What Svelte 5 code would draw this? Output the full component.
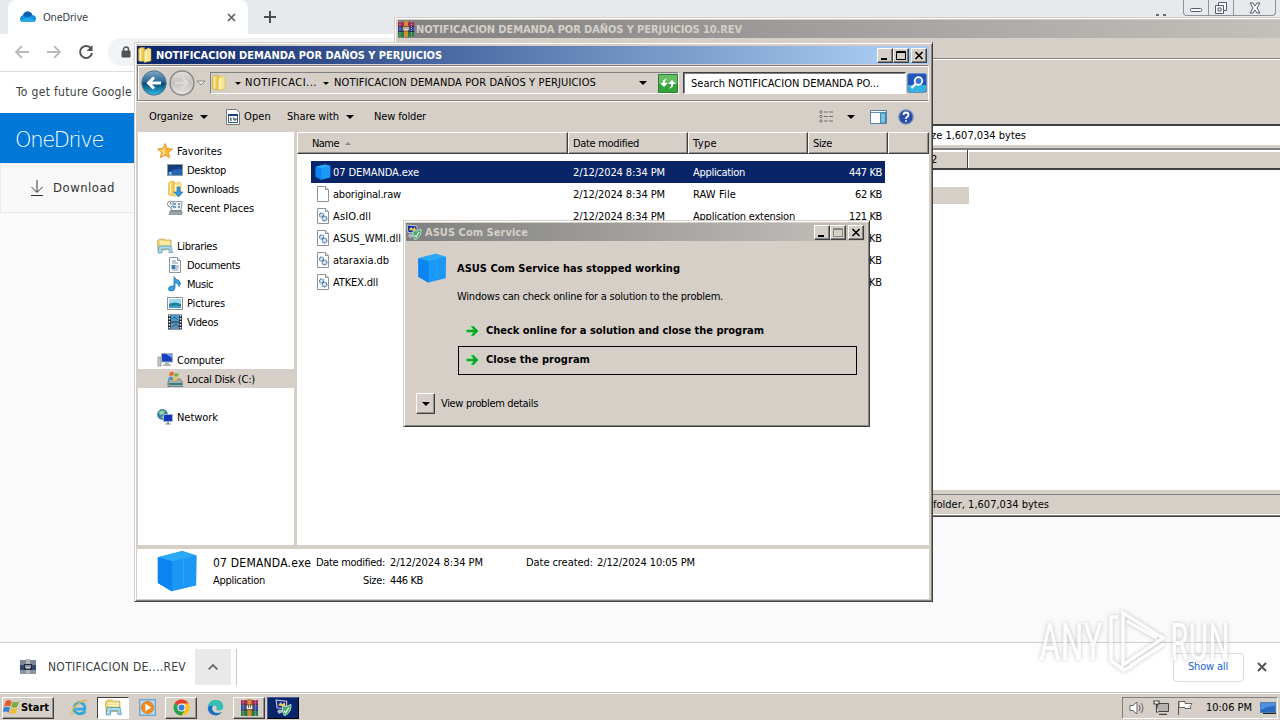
<script>
  const favorites = [
    { label: "Favorites", icon: "star", width: 45, root: true },
    { label: "Desktop", icon: "desktop", width: 39 },
    { label: "Downloads", icon: "downloads", width: 52 },
    { label: "Recent Places", icon: "recent", width: 67 },
  ];
  const libraries = [
    { label: "Libraries", icon: "library", width: 40, root: true },
    { label: "Documents", icon: "document", width: 53 },
    { label: "Music", icon: "music", width: 26 },
    { label: "Pictures", icon: "picture", width: 38 },
    { label: "Videos", icon: "video", width: 31 },
  ];
  const computer = [
    { label: "Computer", icon: "computer", width: 47, root: true },
    { label: "Local Disk (C:)", icon: "disk", width: 68, selected: true },
  ];
  const network = [{ label: "Network", icon: "network", width: 41, root: true }];
  const groups = [favorites, libraries, computer, network];

  const files = [
    { name: "07 DEMANDA.exe", width: 86, modified: true, type: "Application", typeWidth: 52, size: "447 KB", icon: "cube", selected: true },
    { name: "aboriginal.raw", width: 68, modified: true, type: "RAW File", typeWidth: 43, size: "62 KB", icon: "file" },
    { name: "AsIO.dll", width: 38, modified: true, type: "Application extension", typeWidth: 102, size: "121 KB", icon: "dll" },
    { name: "ASUS_WMI.dll", width: 68, size: "KB", icon: "dll" },
    { name: "ataraxia.db", width: 56, size: "KB", icon: "dll" },
    { name: "ATKEX.dll", width: 45, size: "KB", icon: "dll" },
  ];

  const sizeWidths = { 2: 13, 5: 27, 6: 33 };

  const tasks = [
    { icon: "ie", state: "" },
    { icon: "library", state: "pressed" },
    { icon: "media", state: "" },
    { icon: "chrome", state: "raised" },
    { icon: "edge", state: "" },
    { icon: "rar", state: "raised" },
    { icon: "service", state: "flashing" },
  ];

  // Spreads a label's letters so that it takes the given width.
  function fit(node, width) {
    const natural = node.getBoundingClientRect().width;
    const gap = (width - natural) / node.textContent.length;
    node.style.letterSpacing = `${gap}px`;
  }
</script>

{#snippet icon(name, size = 16)}
  <svg class="icon" width={size} height={size} viewBox="0 0 16 16">
    {#if name === "star"}
      <path d="M8 .5l2.100 5 5.400.5-4 3.500 1.200 5.300L8 12.100l-4.700 2.700 1.200-5.300L.5 6l5.300-.5z" fill="#ffb52e" stroke="#e08a2a" stroke-width=".8" />
      <path d="M8 3v8l-3 2 1-4-3-2 3.500-.5z" fill="#ffe08a" />
    {:else if name === "desktop"}
      <rect x=".5" y="2.500" width="15" height="11" fill="#2464b4" stroke="#8e9aa8" />
      <path d="M1 3h14v4Q7 6 1 11z" fill="#173d78" />
      <path d="M2 12h3M2 10.500h2" stroke="#b8dcf5" />
    {:else if name === "folder" || name === "downloads"}
      <path d="M1.500 2l2-1.500h4V14l-4.500.5-1.500-1z" fill="#eec953" stroke="#c9a238" stroke-width=".5" />
      <path d="M3.500 1.500v12" stroke="#fff2b6" stroke-width="1.500" />
      <path d="M7 3.500l4-2.500 3 1v12l-7 1.500z" fill="#fbe48a" stroke="#cda83d" stroke-width=".5" />
      <path d="M9 4v10" stroke="#fff6c8" stroke-width="1.500" />
      {#if name === "downloads"}
        <path d="M10 6h3v5h3l-4.500 5L7 11h3z" fill="#2f9be0" stroke="#1669aa" stroke-width=".6" />
      {/if}
    {:else if name === "recent"}
      <path d="M5 1.500h10l-1 9H4z" fill="#edf3f6" stroke="#8999a3" />
      <path d="M3 11h12v3.500H2z" fill="#9aa6ad" stroke="#68747b" stroke-width=".6" />
      <path d="M7 4h2M11 4h2M6 7h3M11 7h2" stroke="#4683a8" stroke-width="1.500" />
      <circle cx="3.500" cy="4" r="3" fill="#fff" stroke="#7d8e99" />
      <path d="M3.500 2v2h2" fill="none" stroke="#557" stroke-width=".7" />
    {:else if name === "library"}
      <path d="M.5 2.500L3 1h4l1 1h6v9L1 13z" fill="#f2d779" stroke="#ba9b45" stroke-width=".7" />
      <path d="M3 4h10M3 6h10" stroke="#fff9d4" />
      <path d="M2 8h12l1.500 6.500H12V11H5v4H1z" fill="#a9d9ee" stroke="#4d93b4" stroke-width=".7" />
    {:else if name === "document" || name === "file" || name === "dll"}
      <path d="M2.500.5h8l3 3v12h-11z" fill="#fff" stroke="#8b939b" />
      <path d="M10.500.5v3h3" fill="#e4e8ec" stroke="#8b939b" />
      {#if name === "document"}
        <path d="M5 4h4M5 6h6M9 9h3M9 11h3M5 13h6" stroke="#8097aa" />
        <rect x="4.500" y="8" width="4" height="4" fill="#3b7fae" />
      {:else if name === "dll"}
        <circle cx="6.500" cy="7" r="2" fill="#dbe8f5" stroke="#3f719f" stroke-width="1.200" stroke-dasharray="1 .4" />
        <circle cx="9.500" cy="10.500" r="2.300" fill="#dbe8f5" stroke="#3f719f" stroke-width="1.300" stroke-dasharray="1 .4" />
      {/if}
    {:else if name === "music"}
      <path d="M7 .5q1 3 5 4 3 3 0 6 0-3-4-4v5q0 3.500-3.500 3.500T1.500 12.500 5 10h2z" fill="#38a2e2" stroke="#176aa8" stroke-width=".7" />
    {:else if name === "picture"}
      <rect x=".5" y="2.500" width="15" height="12" fill="#fff" stroke="#8a949c" />
      <rect x="2" y="4" width="12" height="9" fill="#9ed7ef" />
      <path d="M2 9q5-3 12 0v4H2z" fill="#277e92" />
      <path d="M2 11q7-1 12 0v2H2z" fill="#3c9ed0" />
    {:else if name === "video"}
      <rect x="1" y=".5" width="14" height="15" fill="#23272d" />
      <rect x="4" y="1" width="8" height="6.500" fill="#4a9ed3" />
      <rect x="4" y="8.500" width="8" height="6.500" fill="#5c93bd" />
      <path d="M5 5l3-2 3 3M5 13l4-3 3 3" stroke="#2b5b80" fill="none" />
      <path d="M2.500 1v14M13.500 1v14" stroke="#fff" stroke-width="1.500" stroke-dasharray="1.500 1.500" />
    {:else if name === "computer"}
      <rect x="1" y="5" width="3" height="9" fill="#c6ccd2" stroke="#777f87" stroke-width=".7" />
      <rect x="4.500" y="1.500" width="11" height="8.500" fill="#173fc0" stroke="#a8b0ba" />
      <path d="M9 2h6v4z" fill="#6f9df0" />
      <path d="M8 10.500h4v2h2v1.500H6v-1.500h2z" fill="#a8afb7" />
    {:else if name === "disk"}
      <path d="M2 8h11l3 4v3.500H1V11z" fill="#a3aeb3" stroke="#59666c" stroke-width=".7" />
      <path d="M2 12h13v2H2z" fill="#367e7a" />
      <path d="M3 1q3-1 4 1L6 5Q4 4 2 5z" fill="#e66a2c" />
      <path d="M8 2q2 1 4 0l-1 3Q9 6 7 5z" fill="#77ad3e" />
      <path d="M2 6q2-1 4 0L5 9Q3 8 1 9z" fill="#4a94d0" />
      <path d="M7 6q2 1 4 0l-1 3Q8 10 6 9z" fill="#f2c73c" />
    {:else if name === "network"}
      <circle cx="5.500" cy="5.500" r="5" fill="#2f8baa" stroke="#29616f" stroke-width=".6" />
      <path d="M2 3q4-3 6 0L6 5 3 6zM4 8l3-1v3z" fill="#a0d5a4" />
      <rect x="6.500" y="5.500" width="9" height="7" fill="#1735bc" stroke="#a8b4c3" />
      <path d="M10 13h2v1.500h2v1H8v-1h2z" fill="#8793a0" />
    {:else if name === "cube"}
      <path d="M.7 2.800L10 .4l5.500 1.700-.2 11.400L6 15.700.7 12.600z" fill="#1b97f6" />
      <path d="M.7 2.800L10 .4l5.500 1.700L6 4.300z" fill="#2ba9f6" />
      <path d="M.7 2.800L6 4.300v11.400L.7 12.600z" fill="#0a84f0" />
      <path d="M6 4.300v11.400" stroke="#0f86ea" stroke-width=".3" />
      <path d="M10.500 3.500v10" stroke="#2aa6f8" stroke-width=".5" />
    {:else if name === "open"}
      <path d="M1.500.5h10l3 3v12h-13z" fill="#fff" stroke="#777" />
      <rect x="3.500" y="5.500" width="9" height="8" fill="#fff" stroke="#345dab" />
      <path d="M3 6h10" stroke="#1a4092" stroke-width="2" />
      <path d="M5 9h1v3M8 9h1v2h2V9" fill="none" stroke="#333" />
    {:else if name === "rar"}
      <path d="M0 1h16v5H0z" fill="#a32d58" />
      <path d="M0 6h16v5H0z" fill="#304ca8" />
      <path d="M0 11h16v5H0z" fill="#267f46" />
      <path d="M0 5.500h16M0 10.500h16" stroke="#20202a" stroke-width=".8" />
      <path d="M6 0h4v16H6z" fill="#d58b31" />
      <path d="M2 1v15M13.500 1v15" stroke="#d1c4bf" stroke-width=".8" stroke-dasharray="1 1" />
      <rect x="4.500" y="5" width="7" height="5.500" fill="#745c43" />
      <path d="M6 6v3h4V6M8 6v3" stroke="#fff" fill="none" />
    {:else if name === "rar-gray"}
      <path d="M0 1h16v5H0z" fill="#7a8898" />
      <path d="M0 6h16v5H0z" fill="#35476a" />
      <path d="M0 11h16v4H0z" fill="#8a94a0" />
      <path d="M6 0h4v15H6z" fill="#b0b4b8" />
      <path d="M4 5h8v6H4z" fill="#202a45" />
      <path d="M6 6v3h4V6M8 6v3" stroke="#fff" fill="none" />
    {:else if name === "service"}
      <path d="M1 1l10 1v7L2 8.500z" fill="#162c9d" stroke="#c6ccdb" />
      <path d="M3 6l2-3 2 2 2-2 1 4z" fill="#e8d24b" />
      <path d="M3 10h5v2l-4 2-2-2z" fill="#adb7c5" />
      <path d="M7 7q4 1 8-2 1 7-6 11-3-4-2-9z" fill="#48a967" stroke="#c4e6df" stroke-width=".8" />
      <path d="M8.500 11l1.500 2 3-5" stroke="#e6f6ec" fill="none" stroke-width="1.200" />
    {:else if name === "ie"}
      <path d="M13.500 11.500Q11.500 14 8 14 3 13.500 3 8.500 3.500 4 8 3.500q5.500.5 5 6H5" fill="none" stroke="#35a7df" stroke-width="2.600" />
      <path d="M1.500 14.500Q-1 11 6 5 13 0 15 1.500" fill="none" stroke="#e7b73d" stroke-width="1.300" />
    {:else if name === "media"}
      <rect x=".7" y=".7" width="14.600" height="14.600" fill="#b9dcf2" stroke="#5798c9" />
      <circle cx="8" cy="8" r="5.800" fill="#f38b1e" stroke="#d76f0b" stroke-width=".6" />
      <path d="M6 4.500L11.500 8 6 11.500z" fill="#fff" />
    {:else if name === "chrome"}
      <circle cx="8" cy="8" r="7.500" fill="#fbc116" />
      <path d="M8 8L1.500 4.300A7.500 7.500 0 0 1 14.500 4.300H8z" fill="#df3d30" />
      <path d="M8 8L1.500 4.300A7.500 7.500 0 0 0 8 15.500L11.300 10z" fill="#29a052" />
      <circle cx="8" cy="8" r="3.800" fill="#fff" />
      <circle cx="8" cy="8" r="2.900" fill="#3f7de0" />
    {:else if name === "edge"}
      <path d="M.7 8A7.400 7.400 0 0 1 8 .6q6.600 0 7.400 6.200.2 4-4.600 4-2.800 0-1.800-2Q9 6 6.500 6 3 5.500.7 8z" fill="#35bfb5" />
      <path d="M.7 8Q2.500 5.500 6 6q-2 2-.5 5 2.500 3.500 8.500 1.300-2.500 3.300-6 3.200Q1 15 .7 8z" fill="#1472c5" />
    {:else if name === "start"}
      <path d="M2.500 2q3-2 5.500 0L7 7Q4 5.500 1 7z" fill="#e65c28" />
      <path d="M9 2.500q3 1.500 6-.5l-1.500 5Q10.500 9 8 7.500z" fill="#78ae38" />
      <path d="M.7 8Q4 6.500 6.700 8.200L5.400 13Q3 11 -.5 12.500z" fill="#4085cc" />
      <path d="M7.700 8.500q3 1.500 5.600-.2L12 13q-2.500 2-5.500.3z" fill="#f2bd2c" />
    {:else if name === "screen"}
      <rect x=".5" y="2.500" width="15" height="10" fill="#2868bf" stroke="#5b7ea8" />
      <path d="M1 3h14v3Q8 6 1 10z" fill="#4a91df" />
      <path d="M3 13.500h13" stroke="#222" />
    {:else if name === "arrow"}
      <path d="M1 6.200h6.500L5 2.500h3.500L14 8l-5.500 5.500H5l2.500-3.700H1z" fill="#1dc03a" stroke="#bfe6c0" stroke-width=".8" />
      <path d="M2 8h10M8 4l4 4-4 4" fill="none" stroke="#0c9a26" stroke-width="1.300" />
    {/if}
  </svg>
{/snippet}

{#snippet caret()}
  <svg class="caret" width="8" height="4" viewBox="0 0 8 4"><path d="M0 0h8L4 4z" /></svg>
{/snippet}

{#snippet controls(dimmed = false)}
  <div class="controls">
    <span class="control"><svg width="12" height="11"><path d="M2 9h6" stroke="#000" stroke-width="2" /></svg></span>
    <span class="control" class:dimmed>
      <svg width="12" height="11"><path d="M1.500 1.500h9v8h-9zM1 2.500h9" fill="none" stroke="currentColor" /></svg>
    </span>
    <span class="control close"><svg width="12" height="11"><path d="M2.500 2l7 7M9.500 2l-7 7" stroke="#000" stroke-width="1.600" /></svg></span>
  </div>
{/snippet}

<div class="screen">
  <div class="browser">
    <div class="tab-strip">
      <div class="tab">
        <svg width="16" height="12" viewBox="0 0 16 12">
          <path d="M3 4Q5-1 10 1q2 1 2 3 4 0 4 3.500T12.500 11h-9Q0 11 0 8t3-4z" fill="#1490df" />
          <path d="M3 4Q5-1 10 1q2 1 2 3L7 7z" fill="#0a5daf" />
          <path d="M1 9.500L8 6l7 3.500q-1 1.500-3 1.500h-9q-1.500 0-2-1.500z" fill="#28a8ea" />
        </svg>
        <span class="tab-title" use:fit={45}>OneDrive</span>
        <svg class="tab-close" width="9" height="9"><path d="M1 1l7 7M8 1L1 8" stroke="#5f6368" stroke-width="1.700" /></svg>
      </div>
      <svg class="new-tab" width="12" height="12"><path d="M6 0v12M0 6h12" stroke="#4a4d51" stroke-width="2" /></svg>
      <svg class="tab-search" width="10" height="3"><path d="M0 1h3M7 1h3" stroke="#666b70" stroke-width="2" /></svg>
      <div class="frame-buttons">
        <span><svg width="14" height="16"><rect x="1.500" y="8.500" width="11" height="3" rx="1" /></svg></span>
        <span><svg width="14" height="16"><path d="M4.500 5V2.500h8v8H10M1.500 5.500h8v8h-8zM4 8h3v3H4z" /></svg></span>
        <span class="wide"><svg width="14" height="16"><path d="M2 3h3l2 3 2-3h3L9 8l3 5H9L7 10l-2 3H2l3-5z" /></svg></span>
      </div>
    </div>
    <div class="toolbar">
      <svg width="16" height="14" viewBox="0 0 16 14"><path d="M15 7H2M8 1L2 7l6 6" fill="none" stroke="#b8babd" stroke-width="1.800" /></svg>
      <svg width="16" height="14" viewBox="0 0 16 14"><path d="M1 7h13M8 1l6 6-6 6" fill="none" stroke="#b8babd" stroke-width="1.800" /></svg>
      <svg width="16" height="16" viewBox="0 0 16 16"><path d="M13 4.500A6 6 0 1 0 14 9" fill="none" stroke="#505357" stroke-width="2" /><path d="M14.500 1v6h-6z" fill="#505357" /></svg>
      <div class="omnibox">
        <svg width="10" height="12" viewBox="0 0 10 12"><path d="M1 5h8v6H1z" fill="#505357" stroke="#505357" /><path d="M2.500 5V3.500a2.500 2.500 0 0 1 5 0V5" fill="none" stroke="#505357" stroke-width="1.500" /></svg>
      </div>
    </div>
    <div class="infobar"><span use:fit={116}>To get future Google</span></div>
    <div class="brand"><span use:fit={88}>OneDrive</span></div>
    <div class="commands">
      <svg width="14" height="16"><path d="M7 0v12M1.500 7L7 12.500 12.500 7M1 15.500h12" fill="none" stroke="#333" /></svg>
      <span use:fit={62}>Download</span>
    </div>
    <div class="page"></div>
    <div class="shelf">
      {@render icon("rar-gray")}
      <span class="shelf-name" use:fit={138}>NOTIFICACION DE....REV</span>
      <span class="shelf-menu"><svg width="10" height="6"><path d="M.7 5.300L5 1l4.300 4.300" fill="none" stroke="#5f6368" stroke-width="1.700" /></svg></span>
      <span class="shelf-divider"></span>
      <span class="show-all"><span use:fit={40}>Show all</span></span>
      <svg width="10" height="10"><path d="M1 1l8 8M9 1L1 9" stroke="#505357" stroke-width="1.900" /></svg>
    </div>
  </div>

  <div class="winrar">
    <div class="title inactive">
      {@render icon("rar")}
      <span use:fit={326}>NOTIFICACION DEMANDA POR DAÑOS Y PERJUICIOS 10.REV</span>
    </div>
    <div class="rar-menu"></div>
    <div class="rar-tools"></div>
    <div class="rar-path"><span use:fit={95}>ze 1,607,034 bytes</span></div>
    <div class="rar-head"><span class="rar-col">2</span></div>
    <div class="rar-list"><div class="rar-row"></div></div>
    <div class="rar-status"><span use:fit={116}>folder, 1,607,034 bytes</span></div>
  </div>

  <div class="explorer">
    <div class="title">
      {@render icon("folder")}
      <span use:fit={286}>NOTIFICACION DEMANDA POR DAÑOS Y PERJUICIOS</span>
      {@render controls()}
    </div>
    <div class="nav">
      <svg width="68" height="30" viewBox="0 0 68 30">
        <defs>
          <linearGradient id="back" x1="0" y1="0" x2="0" y2="1">
            <stop offset="0" stop-color="#86a8bf" />
            <stop offset=".48" stop-color="#1e6596" />
            <stop offset=".52" stop-color="#064775" />
            <stop offset="1" stop-color="#2fc0e8" />
          </linearGradient>
          <linearGradient id="forward" x1="0" y1="0" x2="0" y2="1">
            <stop offset="0" stop-color="#e4e2df" />
            <stop offset=".5" stop-color="#c2c0bd" />
            <stop offset="1" stop-color="#e9e9e8" />
          </linearGradient>
        </defs>
        <circle cx="15" cy="15" r="12.200" fill="url(#back)" stroke="#56748a" />
        <path d="M22 15H10M15 9.500L9.500 15l5.500 5.500" fill="none" stroke="#fff" stroke-width="3" />
        <circle cx="43" cy="15" r="12" fill="url(#forward)" stroke="#888" stroke-width="1.400" />
        <path d="M36 15h12M43 9.500l5.500 5.500-5.500 5.500" fill="none" stroke="#dddbd8" stroke-width="2.500" />
        <path d="M58 13h8l-4 4z" fill="#eee" stroke="#777" stroke-width=".8" />
      </svg>
      <div class="address">
        {@render icon("folder")}
        <svg class="crumb" width="6" height="3"><path d="M0 0h6L3 3z" /></svg>
        <span use:fit={72}>NOTIFICACI...</span>
        <svg class="crumb" width="6" height="3"><path d="M0 0h6L3 3z" /></svg>
        <span use:fit={262}>NOTIFICACION DEMANDA POR DAÑOS Y PERJUICIOS</span>
        <span class="drop">{@render caret()}</span>
        <svg class="refresh" width="20" height="19" viewBox="0 0 20 19">
          <rect x=".5" y=".5" width="19" height="18" fill="#36a33b" stroke="#2f8135" />
          <path d="M1 1h18v8H1z" fill="#65bc62" />
          <path d="M9 4L5 6.500V9H2l4 4 4-4H7V7zM11 15l4-2.500V10h3l-4-4-4 4h3v2z" fill="#fff" />
        </svg>
      </div>
      <div class="search"><span use:fit={193}>Search NOTIFICACION DEMANDA PO...</span></div>
      <svg width="20" height="20" viewBox="0 0 20 20">
        <rect x=".5" y=".5" width="19" height="19" rx="2" fill="#1f55bd" stroke="#6791c5" />
        <path d="M1 12h18v5q0 2-2 2H3q-2 0-2-2z" fill="#35b3e0" />
        <circle cx="11.500" cy="8" r="3.800" fill="#3a74d0" stroke="#fff" stroke-width="1.800" />
        <path d="M8.500 11L4.500 15" stroke="#fff" stroke-width="2.400" />
      </svg>
    </div>
    <div class="actions">
      <span use:fit={44}>Organize</span>
      <span class="organize-caret">{@render caret()}</span>
      {@render icon("open")}
      <span class="open" use:fit={27}>Open</span>
      <span class="share" use:fit={52}>Share with</span>
      <span class="share-caret">{@render caret()}</span>
      <span class="new" use:fit={52}>New folder</span>
      <div class="view-tools">
        <svg width="15" height="13"><path d="M1 1h2v2H1zM1 5.500h2v2H1zM1 10h2v2H1z" fill="#fff" stroke="#777" /><path d="M5 2h10M5 6.500h10M5 11h10" stroke="#6f6c74" stroke-dasharray="4 1" /></svg>
        {@render caret()}
        <svg width="17" height="14"><path d="M.5.500h16v13H.5z" fill="#fff" stroke="#5680a8" /><path d="M1 2.500h15" stroke="#6690bd" /><path d="M10.500 3h5v10h-5z" fill="#75c2e3" stroke="#4288ad" /></svg>
        <svg class="help" width="16" height="16" viewBox="0 0 16 16">
          <circle cx="8" cy="8" r="7.200" fill="#294dab" stroke="#7e91b8" stroke-width="1.300" />
          <path d="M5.500 6Q5.500 3.500 8 3.500T10.500 6Q10.500 7 9 8 8 8.500 8 10M8 11.200v1.600" fill="none" stroke="#fff" stroke-width="1.800" />
        </svg>
      </div>
    </div>
    <div class="body">
      <div class="sidebar">
        {#each groups as group}
          <div class="group">
            {#each group as item}
              <div class="place" class:root={item.root} class:selected={item.selected}>
                {@render icon(item.icon)}
                <span use:fit={item.width}>{item.label}</span>
              </div>
            {/each}
          </div>
        {/each}
      </div>
      <div class="listing">
        <div class="columns">
          <span class="col name">
            <span use:fit={27}>Name</span>
            <svg width="6" height="3"><path d="M0 3h6L3 0z" fill="#8d8983" /></svg>
          </span>
          <span class="col"><span use:fit={66}>Date modified</span></span>
          <span class="col"><span use:fit={24}>Type</span></span>
          <span class="col"><span use:fit={19}>Size</span></span>
          <span class="col"></span>
        </div>
        <div class="files">
          {#each files as file}
            <div class="file" class:selected={file.selected}>
              {@render icon(file.icon)}
              <span class="file-name"><span use:fit={file.width}>{file.name}</span></span>
              <span class="file-cell">{#if file.modified}<span use:fit={92}>2/12/2024 8:34 PM</span>{/if}</span>
              <span class="file-cell">{#if file.type}<span use:fit={file.typeWidth}>{file.type}</span>{/if}</span>
              <span class="file-size"><span use:fit={sizeWidths[file.size.length]}>{file.size}</span></span>
            </div>
          {/each}
        </div>
      </div>
    </div>
    <div class="details">
      {@render icon("cube", 42)}
      <div class="detail-lines">
        <div class="detail-line">
          <span class="detail-name"><span use:fit={98}>07 DEMANDA.exe</span></span>
          <span class="detail-key"><span use:fit={69}>Date modified:</span></span>
          <span class="detail-value"><span use:fit={93}>2/12/2024 8:34 PM</span></span>
          <span use:fit={67}>Date created:</span>
          <span class="created"><span use:fit={98}>2/12/2024 10:05 PM</span></span>
        </div>
        <div class="detail-line">
          <span class="detail-name small"><span use:fit={52}>Application</span></span>
          <span class="detail-key"><span use:fit={22}>Size:</span></span>
          <span class="detail-value"><span use:fit={33}>446 KB</span></span>
        </div>
      </div>
    </div>
  </div>

  <div class="dialog">
    <div class="title inactive">
      {@render icon("service")}
      <span use:fit={103}>ASUS Com Service</span>
      {@render controls(true)}
    </div>
    <div class="message">
      {@render icon("cube", 30)}
      <div class="message-text">
        <b use:fit={223}>ASUS Com Service has stopped working</b>
        <span use:fit={266}>Windows can check online for a solution to the problem.</span>
      </div>
    </div>
    <div class="choice">
      {@render icon("arrow")}
      <b use:fit={278}>Check online for a solution and close the program</b>
    </div>
    <div class="choice focused">
      {@render icon("arrow")}
      <b use:fit={104}>Close the program</b>
    </div>
    <div class="problem">
      <span class="expand">{@render caret()}</span>
      <span use:fit={97}>View problem details</span>
    </div>
  </div>

  <div class="taskbar">
    <div class="start">
      {@render icon("start", 17)}
      <b use:fit={28}>Start</b>
    </div>
    <div class="tasks">
      {#each tasks as task}
        <span class="task {task.state}">{@render icon(task.icon, 17)}</span>
      {/each}
    </div>
    <div class="tray">
      <svg width="16" height="14" viewBox="0 0 16 14"><path d="M1 4.500h3L8 1v12L4 9.500H1z" fill="#fff" stroke="#666" /><path d="M10 4q2 3 0 6M12 2q4 5 0 10" fill="none" stroke="#777" stroke-width="1.200" /></svg>
      <svg width="16" height="15" viewBox="0 0 16 15"><path d="M4.500 3.500h11v8h-11z" fill="#b5b1ac" stroke="#444" /><path d="M1 1h5v3H1zM3.500 4v8h2M6 14.300h8" fill="#fff" stroke="#444" stroke-width="1.200" /></svg>
      <svg width="16" height="15" viewBox="0 0 16 15"><path d="M1.500 1v14" stroke="#555" /><path d="M2 1.500h6v2h7l-2 3 1 2H8v-1H2z" fill="#fff" stroke="#666" /></svg>
      <span class="clock" use:fit={46}>10:06 PM</span>
      {@render icon("screen")}
    </div>
  </div>

  <svg class="watermark" width="200" height="68" viewBox="0 0 200 68">
    <text x="3" y="53" textLength="64" lengthAdjust="spacingAndGlyphs">ANY</text>
    <path d="M87 6l40 25-40 27zM82 10h-7v44l13 9 8-4M94 59l34-22M91 14l30 17" />
    <text x="134" y="53" textLength="60" lengthAdjust="spacingAndGlyphs">RUN</text>
  </svg>
</div>

<style>
  :global(body) {
    margin: 0;
    overflow: hidden;
  }

  .screen {
    position: relative;
    width: 1280px;
    height: 720px;
    overflow: hidden;
    background: #fafafa;
    color: #000;
    font-family: "DejaVu Sans Condensed", "DejaVu Sans", Tahoma, sans-serif;
    font-size: 11px;
    font-stretch: condensed;
    line-height: 14px;
    white-space: nowrap;
  }
  .screen * { box-sizing: border-box; }
  svg { flex-shrink: 0; }

  /* browser */
  .browser {
    display: flex;
    flex-direction: column;
    height: 693px;
    color: #3c4043;
  }
  .tab-strip {
    display: flex;
    height: 34px;
    padding-left: 8px;
    background: #e6eaed;
  }
  .tab {
    display: flex;
    align-items: center;
    width: 240px;
    padding: 0 12px;
    border-radius: 8px 8px 0 0;
    background: #fff;
  }
  .tab-title { margin-left: 7px; padding-top: 1px; }
  .tab-close { margin-left: auto; }
  .new-tab { margin: 11px 0 0 16px; }
  .tab-search { margin: 14px 17px 0 auto; }
  .frame-buttons {
    display: flex;
    height: 16px;
    margin-right: 4px;
    border: 1px solid #8d9399;
    border-top: 0;
    border-radius: 0 0 4px 4px;
  }
  .frame-buttons span {
    display: flex;
    justify-content: center;
    width: 25px;
    border-right: 1px solid #8d9399;
  }
  .frame-buttons .wide { width: 41px; border: 0; }
  .frame-buttons svg { fill: #f7f9fa; stroke: #555b66; }
  .toolbar {
    display: flex;
    align-items: center;
    gap: 16px;
    height: 38px;
    padding: 0 0 1px 14px;
    border-bottom: 1px solid #dadce0;
    background: #fff;
  }
  .omnibox {
    display: flex;
    align-items: center;
    flex: 1;
    height: 28px;
    margin-left: -2px;
    padding-left: 13px;
    border-radius: 14px 0 0 14px;
    background: #f1f3f4;
  }
  .infobar {
    height: 41px;
    padding: 13px 16px;
    background: #fff;
    font-size: 12px;
  }
  .brand {
    height: 50px;
    padding: 13px 15px;
    background: #0078d7;
    color: #fff;
    font-family: "DejaVu Sans", sans-serif;
    font-size: 21px;
    font-stretch: normal;
    font-weight: 200;
    line-height: 28px;
  }
  .commands {
    display: flex;
    align-items: center;
    gap: 9px;
    height: 50px;
    padding-left: 29px;
    border: 1px solid #ebebeb;
    background: #f8f8f8;
    color: #333;
    font-size: 13px;
  }
  .page { flex: 1; background: #fafafa; }
  .shelf {
    display: flex;
    align-items: center;
    height: 51px;
    padding: 0 13px 2px 20px;
    border-top: 1px solid #cfcfcf;
    background: #fff;
  }
  .shelf-name { margin-left: 12px; font-size: 12px; }
  .shelf-menu {
    display: flex;
    align-items: center;
    justify-content: center;
    width: 36px;
    height: 36px;
    margin-left: 9px;
    background: #e9e9e9;
  }
  .shelf-divider {
    width: 1px;
    height: 37px;
    margin-left: 5px;
    background: #c9c9c9;
  }
  .show-all {
    width: 71px;
    height: 29px;
    margin: 0 13px 0 auto;
    padding: 6px 0 0 14px;
    border: 1px solid #dadce0;
    border-radius: 4px;
    color: #1967d2;
  }

  /* classic windows */
  .winrar, .explorer, .dialog {
    position: absolute;
    display: flex;
    flex-direction: column;
    border: 1px solid #d5cfc7;
    border-right-color: #404040;
    border-bottom-color: #404040;
    background: #d5cfc8;
    box-shadow: inset 1px 1px #fff, inset -1px -1px #85817b;
  }
  .title {
    display: flex;
    align-items: center;
    gap: 3px;
    flex-shrink: 0;
    height: 18px;
    background: linear-gradient(to right, #0a246a, #a6caf0 94%);
    color: #fff;
    font-weight: bold;
  }
  .title > span { padding-top: 1px; }
  .title.inactive {
    background: linear-gradient(to right, #808080, #c4c1bc);
    color: #d5cfc8;
  }
  .controls { display: flex; margin-left: auto; padding-right: 2px; }
  .control {
    display: flex;
    width: 16px;
    height: 15px;
    padding: 1px;
    border: 1px solid;
    border-color: #fff #404040 #404040 #fff;
    background: #d5cfc8;
    box-shadow: inset -1px -1px #808080;
    color: #000;
  }
  .control.close { margin-left: 2px; }
  .dimmed { color: #8a867f; }

  .winrar {
    left: 394px;
    top: 17px;
    width: 900px;
    height: 500px;
    padding: 2px 3px 1px 3px;
  }
  .winrar .title { gap: 2px; }
  .rar-menu { height: 21px; border-bottom: 1px solid #85817b; }
  .rar-tools { height: 65px; border-top: 1px solid #fff; }
  .rar-path, .rar-head, .rar-status { padding-left: 533px; }
  .rar-path {
    height: 24px;
    padding-top: 3px;
    border-top: 2px solid #404040;
    border-bottom: 3px solid #d5cfc7;
    background: #fff;
  }
  .rar-head {
    height: 22px;
    border-top: 2px solid #808080;
    border-bottom: 2px solid #404040;
    box-shadow: inset 0 2px #fff;
  }
  .rar-col {
    display: block;
    width: 37px;
    height: 100%;
    padding-top: 3px;
    border-right: 1px solid #404040;
    box-shadow: 1px 0 #fff;
  }
  .rar-list { flex: 1; padding-top: 17px; background: #fff; }
  .rar-row { width: 571px; height: 17px; background: #d5cfc7; }
  .rar-status {
    height: 25px;
    padding-top: 4px;
    padding-left: 535px;
    border-top: 4px solid #d5cfc7;
    border-bottom: 1px solid #fff;
    box-shadow: inset 0 1px #808080;
  }

  .explorer {
    left: 134px;
    top: 42px;
    width: 799px;
    height: 560px;
    padding: 3px 3px 2px 2px;
  }
  .nav {
    display: flex;
    align-items: center;
    flex-shrink: 0;
    height: 36px;
    margin-top: 1px;
    padding-left: 1px;
    border: 1px solid #808080;
    border-right-color: #fff;
    border-bottom-color: #808080;
    box-shadow: inset 1px 1px #fff, 0 1px #fff;
  }
  .address {
    display: flex;
    align-items: center;
    width: 469px;
    height: 22px;
    margin-left: 3px;
    border: 1px solid;
    border-color: #808080 #fff #fff #808080;
  }
  .crumb { margin: 0 4px 0 8px; }
  .address span + .crumb { margin-left: 6px; margin-right: 5px; }
  .drop { display: flex; margin-left: auto; margin-right: 11px; }
  .search {
    width: 223px;
    height: 22px;
    margin: 0 1px 0 4px;
    padding: 4px 6px 2px 7px;
    border: 1px solid;
    border-color: #404040 #fff #fff #404040;
    background: #fff;
    box-shadow: inset 1px 1px #808080;
  }
  .search span { display: block; width: 193px; }
  .actions {
    display: flex;
    align-items: center;
    flex-shrink: 0;
    height: 31px;
    padding-left: 12px;
  }
  .organize-caret, .share-caret { display: flex; }
  .organize-caret { margin: 0 17px 0 7px; }
  .open { margin-left: 3px; }
  .share { margin-left: 16px; }
  .share-caret { margin-left: 7px; }
  .new { margin-left: 20px; }
  .view-tools { display: flex; align-items: center; margin-left: auto; padding-right: 15px; }
  .view-tools > :global(.caret) { margin: 0 15px 0 13px; }
  .help { margin-left: 11px; }

  .body { display: flex; flex: 1; min-height: 0; border-left: 1px solid #d5cfc7; }
  .sidebar { flex-shrink: 0; width: 156px; padding-top: 9px; background: #fff; }
  .group { margin-bottom: 19px; }
  .place {
    display: flex;
    align-items: center;
    gap: 4px;
    height: 19px;
    padding-left: 29px;
  }
  .place.root { padding-left: 19px; }
  .place span, .col > span, .file > span { padding-top: 2px; }
  .place.selected { background: #d5cfc8; }
  .listing { flex: 1; min-width: 0; margin-left: 3px; background: #fff; }
  .columns { display: flex; height: 22px; background: #d5cfc8; }
  .col {
    display: flex;
    align-items: center;
    flex-shrink: 0;
    gap: 6px;
    width: 120px;
    padding-left: 4px;
    border: 1px solid;
    border-color: #fff #404040 #404040 #fff;
    box-shadow: inset -1px -1px #96918b;
  }
  .col.name { width: 271px; padding-left: 14px; }
  .col:nth-child(4) { width: 80px; }
  .col:last-child { flex: 1; }
  .files { padding: 7px 0 0 14px; }
  .file {
    display: flex;
    align-items: center;
    width: 574px;
    height: 22px;
    padding: 0 3px 0 4px;
  }
  .file.selected { background: #0a246a; color: #fff; }
  .file-name { width: 240px; margin-left: 2px; }
  .file-cell { width: 120px; }
  .file-size { flex: 1; text-align: right; }

  .details {
    display: flex;
    flex-shrink: 0;
    gap: 15px;
    height: 54px;
    padding: 1px 0 0 19px;
    border-top: 4px solid #d5cfc7;
    background: #fff;
  }
  .detail-lines { padding-top: 4px; }
  .detail-line { display: flex; align-items: center; height: 18px; }
  .detail-name { width: 101px; font-size: 12px; }
  .detail-name.small { font-size: 11px; }
  .detail-key { width: 71px; text-align: right; }
  .detail-value { width: 136px; margin-left: 5px; }
  .created { margin-left: 4px; }

  .dialog {
    left: 403px;
    top: 220px;
    width: 467px;
    height: 207px;
    padding: 2px 3px 3px 2px;
  }
  .message { display: flex; height: 76px; padding: 12px 0 0 11px; }
  .message-text {
    display: flex;
    flex-direction: column;
    gap: 14px;
    padding: 9px 0 0 10px;
  }
  .message-text > * { align-self: flex-start; }
  .choice {
    display: flex;
    align-items: center;
    gap: 5px;
    height: 29px;
    margin: 0 9px 0 52px;
    padding: 0 0 2px 6px;
    border: 1px solid transparent;
  }
  .choice.focused { border-color: #000; }
  .problem {
    display: flex;
    align-items: center;
    gap: 6px;
    margin-top: 18px;
    padding-left: 10px;
  }
  .expand {
    display: flex;
    align-items: center;
    justify-content: center;
    width: 19px;
    height: 21px;
    border: 1px solid;
    border-color: #fff #404040 #404040 #fff;
    box-shadow: inset -1px -1px #96918b;
  }

  /* taskbar */
  .taskbar {
    position: relative;
    display: flex;
    align-items: center;
    height: 27px;
    padding: 1px 2px 0;
    border-top: 1px solid #fff;
    background: #d5cfc8;
    box-shadow: 0 -1px #cbc6be;
  }
  .start {
    display: flex;
    align-items: center;
    gap: 1px;
    width: 52px;
    height: 22px;
    border: 1px solid;
    border-color: #fff #404040 #404040 #fff;
    box-shadow: inset -1px -1px #96918b;
  }
  .tasks { display: flex; gap: 2px; margin-left: 9px; }
  .task {
    display: flex;
    align-items: center;
    justify-content: center;
    width: 32px;
    height: 22px;
    border: 1px solid transparent;
  }
  .task.raised {
    border-color: #fff #404040 #404040 #fff;
    box-shadow: inset -1px -1px #96918b;
  }
  .task.pressed { border-color: #404040 #fff #fff #404040; background: #fff; }
  .task.flashing { border-color: #4a5d92 #000 #000 #4a5d92; background: #0a246a; }
  .tray {
    display: flex;
    align-items: center;
    gap: 8px;
    width: 156px;
    height: 22px;
    margin-left: auto;
    padding-left: 6px;
    border: 1px solid;
    border-color: #808080 #fff #fff #808080;
  }
  .clock { margin-left: 5px; }

  .watermark {
    position: absolute;
    left: 1036px;
    top: 607px;
    opacity: 0.7;
    filter: drop-shadow(0 0 2px #aaa);
  }
  .watermark text {
    fill: #fff;
    font-family: Roboto, sans-serif;
    font-size: 52px;
  }
  .watermark path { fill: none; stroke: #fff; stroke-width: 3.5; }
</style>
